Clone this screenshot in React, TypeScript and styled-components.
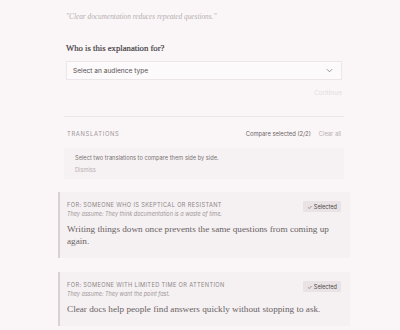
import React from "react";
import styled, { createGlobalStyle } from "styled-components";

const colors = {
  bg: "#faf6f7",
  ink: "#443d3f",
  muted: "#8c8486",
  faint: "#b6aeb0",
  ghost: "#e4dddf",
  line: "#ece6e8",
  panel: "#f5f1f2",
  badge: "#e9e3e5",
};

const serif = `"Liberation Serif", "DejaVu Serif", serif`;
const sans = `Inter, "Noto Sans", sans-serif`;

const GlobalStyle = createGlobalStyle`
  html, body {
    margin: 0;
    padding: 0;
    background: ${colors.bg};
    height: 100%;
    overflow: hidden;
  }
`;

const Page = styled.main`
  width: 400px;
  height: 330px;
  background: ${colors.bg};
  box-sizing: border-box;
  padding: 12px 50px 0 58px;
  font-family: ${sans};
`;

const Section = styled.section`
  padding: 0 8px;
`;

const Quote = styled.p`
  margin: 0;
  font-family: ${serif};
  font-style: italic;
  font-size: 7.3px;
  color: ${colors.faint};
`;

const Question = styled.h3`
  margin: 22px 0 0;
  font-family: ${serif};
  font-weight: 400;
  font-size: 8.7px;
  color: ${colors.ink};
  -webkit-text-stroke: 0.2px ${colors.ink};
`;

const SelectBox = styled.div`
  margin-top: 8px;
  height: 19px;
  box-sizing: border-box;
  border: 1px solid ${colors.line};
  background: #fcfafa;
  display: flex;
  align-items: center;
  justify-content: space-between;
  padding: 0 8px 0 6px;
  font-size: 6.6px;
  color: #544d4f;
`;

const Actions = styled.div`
  display: flex;
  justify-content: flex-end;
  margin-top: 9px;
`;

const Continue = styled.button`
  border: none;
  background: none;
  padding: 0;
  font-family: ${sans};
  font-size: 6.6px;
  color: ${colors.ghost};
`;

const Divider = styled.hr`
  border: none;
  border-top: 1px solid ${colors.line};
  margin: 19px 6px 0;
`;

const ListHeader = styled.div`
  display: flex;
  align-items: center;
  justify-content: space-between;
  margin-top: 13px;
  padding: 0 9px;
`;

const Eyebrow = styled.span`
  font-size: 5.8px;
  letter-spacing: 0.12em;
  text-transform: uppercase;
  color: #9d9597;
`;

const HeaderLinks = styled.div`
  display: flex;
  gap: 8px;
  font-size: 5.8px;
`;

const TextLink = styled.span<{ $dim?: boolean }>`
  color: ${(p) => (p.$dim ? colors.faint : "#6c6466")};
`;

const Note = styled.div`
  margin: 11px 6px 0;
  background: #f6f2f3;
  padding: 6px 11px 6px;
  font-size: 5.7px;
  color: #7a7274;
  display: flex;
  flex-direction: column;
  gap: 5px;
`;

const Card = styled.article<{ $first?: boolean }>`
  margin-top: ${(p) => (p.$first ? 13 : 14)}px;
  background: ${colors.panel};
  border-left: 2px solid #d9d1d3;
  padding: 8px 9px 11px 7px;
`;

const CardTop = styled.div`
  display: flex;
  justify-content: space-between;
  align-items: flex-start;
`;

const Audience = styled.div`
  margin-top: 1px;
  font-size: 5.7px;
  letter-spacing: 0.06em;
  text-transform: uppercase;
  color: #8e8688;
`;

const Assumption = styled.div`
  margin-top: 3px;
  font-size: 5.5px;
  font-style: italic;
  color: #9d9597;
`;

const Badge = styled.span`
  margin-top: 1px;
  background: ${colors.badge};
  color: #4e4749;
  font-size: 5.6px;
  padding: 2.5px 4px;
  border-radius: 1px;
  white-space: nowrap;
`;

const Body = styled.p`
  margin: 6px 0 0;
  font-family: ${serif};
  font-size: 9.2px;
  line-height: 12px;
  color: #6a6264;
  padding-right: 12px;
`;

const Chevron = () => (
  <svg width="7" height="5" viewBox="0 0 8 5" fill="none">
    <path d="M1 1l3 3 3-3" stroke="#8c8486" strokeWidth="1" />
  </svg>
);

const translations = [
  {
    audience: "For: Someone who is skeptical or resistant",
    assume: "They assume: They think documentation is a waste of time.",
    text: "Writing things down once prevents the same questions from coming up again.",
  },
  {
    audience: "For: Someone with limited time or attention",
    assume: "They assume: They want the point fast.",
    text: "Clear docs help people find answers quickly without stopping to ask.",
  },
];

const App: React.FC = () => (
  <Page>
    <GlobalStyle />
    <Section>
      <Quote>"Clear documentation reduces repeated questions."</Quote>
      <Question>Who is this explanation for?</Question>
      <SelectBox>
        Select an audience type
        <Chevron />
      </SelectBox>
      <Actions>
        <Continue>Continue</Continue>
      </Actions>
    </Section>
    <Divider />
    <ListHeader>
      <Eyebrow>Translations</Eyebrow>
      <HeaderLinks>
        <TextLink>Compare selected (2/2)</TextLink>
        <TextLink $dim>Clear all</TextLink>
      </HeaderLinks>
    </ListHeader>
    <Note>
      <span>Select two translations to compare them side by side.</span>
      <TextLink $dim>Dismiss</TextLink>
    </Note>
    {translations.map((t, i) => (
      <Card key={t.audience} $first={i === 0}>
        <CardTop>
          <div>
            <Audience>{t.audience}</Audience>
            <Assumption>{t.assume}</Assumption>
          </div>
          <Badge>✓ Selected</Badge>
        </CardTop>
        <Body>{t.text}</Body>
      </Card>
    ))}
  </Page>
);

export default App;
